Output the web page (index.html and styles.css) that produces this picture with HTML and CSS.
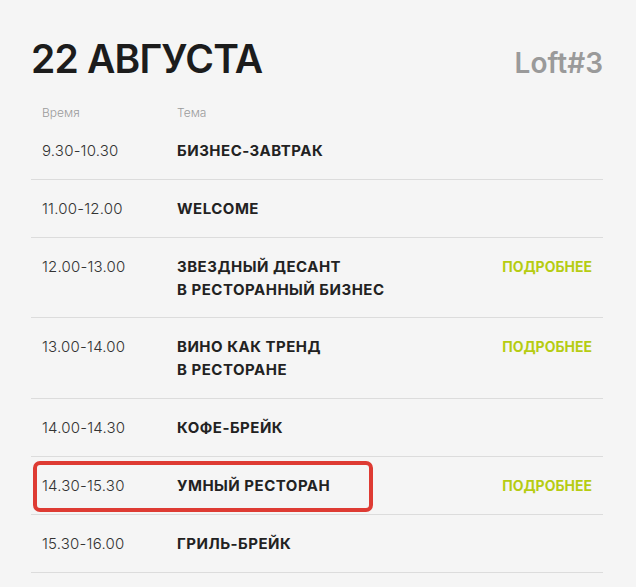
FILE: index.html
```html
<!DOCTYPE html>
<html lang="ru">
<head>
<meta charset="utf-8">
<title>22 августа</title>
<link rel="stylesheet" href="styles.css">
</head>
<body>
<main class="schedule">
  <header class="day-head">
    <h1 class="day-title">22 АВГУСТА</h1>
    <span class="venue">Loft#3</span>
  </header>
  <div class="cols">
    <span class="col-time">Время</span>
    <span class="col-topic">Тема</span>
  </div>
  <ul class="rows">
    <li class="row"><span class="time">9.30-10.30</span><span class="topic">БИЗНЕС-ЗАВТРАК</span></li>
    <li class="row"><span class="time">11.00-12.00</span><span class="topic">WELCOME</span></li>
    <li class="row"><span class="time">12.00-13.00</span><span class="topic">ЗВЕЗДНЫЙ ДЕСАНТ<br>В РЕСТОРАННЫЙ БИЗНЕС</span><a class="more" href="#">ПОДРОБНЕЕ</a></li>
    <li class="row"><span class="time">13.00-14.00</span><span class="topic">ВИНО КАК ТРЕНД<br>В РЕСТОРАНЕ</span><a class="more" href="#">ПОДРОБНЕЕ</a></li>
    <li class="row"><span class="time">14.00-14.30</span><span class="topic">КОФЕ-БРЕЙК</span></li>
    <li class="row row-marked"><span class="time">14.30-15.30</span><span class="topic">УМНЫЙ РЕСТОРАН</span><a class="more" href="#">ПОДРОБНЕЕ</a><span class="mark"></span></li>
    <li class="row"><span class="time">15.30-16.00</span><span class="topic">ГРИЛЬ-БРЕЙК</span></li>
  </ul>
</main>
</body>
</html>
```
FILE: styles.css
```css
html, body {
  margin: 0;
  background: #f5f5f5;
}
body {
  font-family: "Inter", "Noto Sans", sans-serif;
  color: #1f1f1f;
}
.schedule {
  width: 572px;
  padding: 35px 0 0 31px;
}
.day-head {
  display: flex;
  justify-content: space-between;
  align-items: baseline;
}
.day-title {
  margin: 0;
  font-size: 39px;
  line-height: 48px;
  font-weight: 600;
  letter-spacing: -0.8px;
  color: #1c1c1c;
}
.venue {
  font-size: 28px;
  font-weight: 600;
  color: #9a9a9a;
}
.cols {
  display: grid;
  grid-template-columns: 135px 1fr;
  padding: 21px 11px 0;
  font-size: 12px;
  line-height: 18px;
  color: #9b9b9b;
  font-weight: 300;
}
.rows {
  list-style: none;
  margin: 0;
  padding: 0;
}
.row {
  position: relative;
  display: grid;
  grid-template-columns: 135px 1fr auto;
  align-items: start;
  padding: 17px 11px 16.8px;
  border-bottom: 1px solid #dcdcdc;
  font-size: 15px;
  line-height: 23px;
}
.time {
  color: #333;
  font-weight: 300;
  letter-spacing: 0.2px;
}
.topic {
  font-weight: 700;
  color: #222;
  letter-spacing: 0.5px;
}
.more {
  color: #b6cc12;
  font-weight: 700;
  font-size: 14px;
  text-decoration: none;
}
.mark {
  position: absolute;
  left: 2px;
  top: 4px;
  width: 340px;
  height: 51px;
  box-sizing: border-box;
  border: 4px solid #de3b33;
  border-radius: 7px;
}
```
